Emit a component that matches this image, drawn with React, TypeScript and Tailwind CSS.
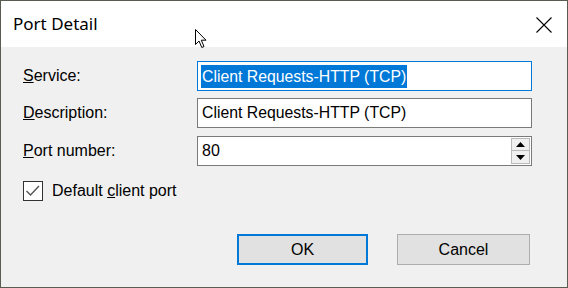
import React from "react";

const font = { fontFamily: '"Liberation Sans", Arial, sans-serif' };

export default function App() {
  return (
    <div
      className="relative w-[568px] h-[288px] border border-[#585d54] bg-[#f0f0f0] flex flex-col text-black"
      style={font}
    >
      {/* Title bar */}
      <div className="h-[46px] bg-white flex items-center justify-between pl-[12px] pr-[15px] shrink-0">
        <span
          className="text-[17px] pb-[1px]"
          style={{ fontFamily: '"Noto Sans", "Open Sans", sans-serif' }}
        >
          Port Detail
        </span>
        <svg width="16" height="16" viewBox="0 0 16 16" className="mt-[1px]">
          <path d="M0.5 0.5 L15.5 15.5 M15.5 0.5 L0.5 15.5" stroke="#000" strokeWidth="1.1" fill="none" />
        </svg>
      </div>

      {/* Body */}
      <div className="flex-1 flex flex-col pl-[22px] pt-[14px] text-[16px]">
        {/* Service */}
        <div className="flex items-center h-[30px]">
          <div className="w-[174px]">
            <u>S</u>ervice:
          </div>
          <div className="w-[335px] h-[30px] border border-[#0078d7] bg-white flex items-center pl-[3px]">
            <span className="bg-[#0078d7] text-white leading-[23px] px-[1px] text-[15.8px]">Client Requests-HTTP (TCP)</span>
          </div>
        </div>

        {/* Description */}
        <div className="flex items-center h-[30px] mt-[7px]">
          <div className="w-[174px]">
            <u>D</u>escription:
          </div>
          <div className="w-[335px] h-[30px] border border-[#7a7a7a] bg-white flex items-center pl-[4px]">
            <span className="text-[15.8px]">Client Requests-HTTP (TCP)</span>
          </div>
        </div>

        {/* Port number */}
        <div className="flex items-center h-[30px] mt-[8px]">
          <div className="w-[174px]">
            <u>P</u>ort number:
          </div>
          <div className="w-[335px] h-[30px] border border-[#7a7a7a] bg-white flex items-stretch">
            <div className="flex-1 flex items-center pl-[4px]">80</div>
            <div className="w-[20px] flex flex-col py-[1px] pr-[1px]">
              <div className="h-[13px] bg-[#f0f0f0] border border-[#b9b9b9] flex items-center justify-center">
                <svg width="9" height="5" viewBox="0 0 9 5">
                  <path d="M4.5 0 L9 5 L0 5 Z" fill="#000" />
                </svg>
              </div>
              <div className="h-[13px] bg-[#f0f0f0] border border-[#b9b9b9] border-t-0 flex items-center justify-center">
                <svg width="9" height="5" viewBox="0 0 9 5">
                  <path d="M0 0 L9 0 L4.5 5 Z" fill="#000" />
                </svg>
              </div>
            </div>
          </div>
        </div>

        {/* Checkbox */}
        <div className="flex items-center mt-[15px] h-[20px]">
          <div className="w-[20px] h-[20px] border border-[#333333] bg-white flex items-center justify-center">
            <svg width="18" height="18" viewBox="0 0 18 18">
              <path d="M2.5 9 L6.5 13 L15 4" stroke="#555" strokeWidth="1.4" fill="none" />
            </svg>
          </div>
          <span className="ml-[9px]">
            Default <u>c</u>lient port
          </span>
        </div>

        {/* Buttons */}
        <div className="flex mt-[33px]">
          <div className="ml-[214px] w-[131px] h-[31px] bg-[#e1e1e1] border-2 border-[#0078d7] flex items-center justify-center">
            OK
          </div>
          <div className="ml-[29px] w-[133px] h-[31px] bg-[#e1e1e1] border border-[#adadad] flex items-center justify-center">
            Cancel
          </div>
        </div>
      </div>

      {/* Mouse cursor overlay */}
      <svg
        className="absolute left-[194px] top-[28px]"
        width="13"
        height="20"
        viewBox="0 0 13 20"
      >
        <path
          d="M0.5 0.5 L0.5 15.5 L4 12 L6.8 18.5 L9 17.5 L6.3 11.2 L11 11.2 Z"
          fill="#fff"
          stroke="#000"
          strokeWidth="1"
          strokeLinejoin="miter"
        />
      </svg>
    </div>
  );
}
